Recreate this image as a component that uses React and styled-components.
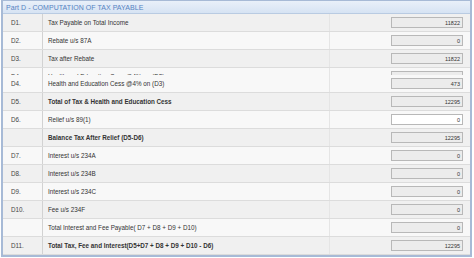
import styled, { createGlobalStyle } from 'styled-components';

const GlobalStyle = createGlobalStyle`
  html, body {
    margin: 0;
    padding: 0;
    background: #ffffff;
  }
  body {
    font-family: "Liberation Sans", Arial, sans-serif;
  }
`;

const Panel = styled.div`
  margin: 0 2px 0 1px;
  border: 2px solid #a7bad6;
  border-top-width: 1px;
  background: #f4f4f4;
`;

const Header = styled.div`
  height: 12px;
  display: flex;
  align-items: center;
  padding-left: 3px;
  background: linear-gradient(#e9f0f9, #d6e3f3);
  border-bottom: 1px solid #b9cbe2;
  color: #5683c2;
  font-size: 7px;
  letter-spacing: 0.05px;
`;

// the screenshot shows the top slice of a repeated row (scroll seam)
const Clip = styled.div`
  height: 7px;
  overflow: hidden;
`;

const Row = styled.div`
  display: grid;
  grid-template-columns: 40px 287px 1fr;
  height: 18px;
  box-sizing: border-box;
  border-bottom: 1px solid #dcdcdc;
  background: ${(p) => (p.$alt ? '#f8f8f8' : '#f0f0f0')};
  font-size: 6.3px;
  color: #333;
`;

const Code = styled.div`
  display: flex;
  align-items: center;
  padding-left: 8px;
  border-right: 1px solid #d2d2d2;
  color: #444;
`;

const Desc = styled.div`
  display: flex;
  align-items: center;
  padding-left: 5px;
  border-right: 1px solid #e5e5e5;
  font-weight: ${(p) => (p.$bold ? 'bold' : 'normal')};
`;

const Cell = styled.div`
  display: flex;
  align-items: center;
  justify-content: flex-end;
  padding-right: 7px;
`;

const Value = styled.div`
  width: 72px;
  height: 11px;
  box-sizing: border-box;
  border: 1px solid #b8b8b8;
  background: ${(p) => (p.$editable ? '#ffffff' : '#ececec')};
  display: flex;
  align-items: center;
  justify-content: flex-end;
  padding-right: 2px;
  font-size: 5.5px;
  color: #333;
`;

const rows = [
  { code: 'D1.', label: 'Tax Payable on Total Income', value: '11822' },
  { code: 'D2.', label: 'Rebate u/s 87A', value: '0' },
  { code: 'D3.', label: 'Tax after Rebate', value: '11822' },
  { code: 'D4.', label: 'Health and Education Cess @4% on (D3)', value: '473', clipped: true },
  { code: 'D4.', label: 'Health and Education Cess @4% on (D3)', value: '473' },
  { code: 'D5.', label: 'Total of Tax & Health and Education Cess', value: '12295', bold: true },
  { code: 'D6.', label: 'Relief u/s 89(1)', value: '0', editable: true },
  { code: '', label: 'Balance Tax After Relief (D5-D6)', value: '12295', bold: true },
  { code: 'D7.', label: 'Interest u/s 234A', value: '0' },
  { code: 'D8.', label: 'Interest u/s 234B', value: '0' },
  { code: 'D9.', label: 'Interest u/s 234C', value: '0' },
  { code: 'D10.', label: 'Fee u/s 234F', value: '0' },
  { code: '', label: 'Total Interest and Fee Payable( D7 + D8 + D9 + D10)', value: '0' },
  { code: 'D11.', label: 'Total Tax, Fee and Interest(D5+D7 + D8 + D9 + D10 - D6)', value: '12295', bold: true },
];

const TaxRow = ({ row, alt }) => (
  <Row $alt={alt}>
    <Code>{row.code}</Code>
    <Desc $bold={row.bold}>{row.label}</Desc>
    <Cell>
      <Value $editable={row.editable}>{row.value}</Value>
    </Cell>
  </Row>
);

export default function App() {
  let n = 0;
  return (
    <>
      <GlobalStyle />
      <Panel>
        <Header>Part D - COMPUTATION OF TAX PAYABLE</Header>
        {rows.map((row, i) => {
          if (row.clipped) {
            return (
              <Clip key={i}>
                <TaxRow row={row} alt={n % 2 === 1} />
              </Clip>
            );
          }
          const alt = n % 2 === 1;
          n += 1;
          return <TaxRow key={i} row={row} alt={alt} />;
        })}
      </Panel>
    </>
  );
}
